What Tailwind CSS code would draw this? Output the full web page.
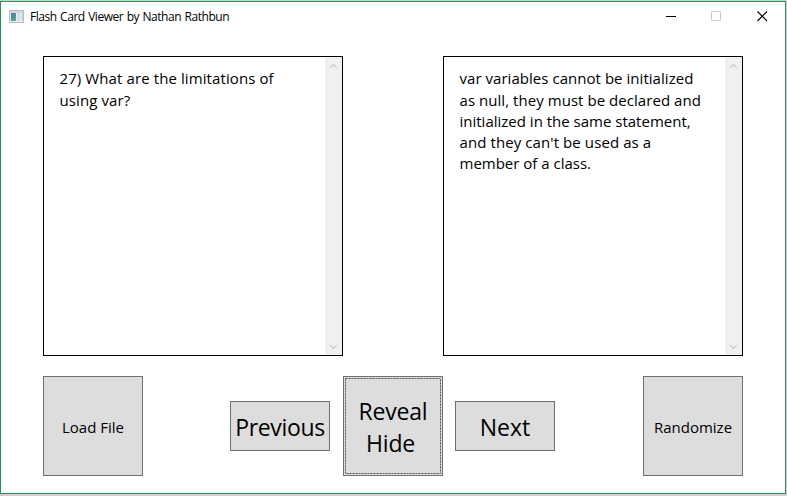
<!DOCTYPE html>
<html lang="en">
<head>
<meta charset="utf-8">
<title>Flash Card Viewer by Nathan Rathbun</title>
<script src="https://cdn.jsdelivr.net/npm/@tailwindcss/browser@4"></script>
</head>
<body class="w-[787px] h-[496px] overflow-hidden bg-[#d0d0d0] pt-px font-['Open_Sans','Noto_Sans',sans-serif] text-black">
<div class="w-[786px] h-[493px] border border-[#2a9058] bg-white flex flex-col">
  <header class="h-[30px] flex items-center shrink-0">
    <svg class="ml-2 mb-px w-4 h-[14px] shrink-0" viewBox="0 0 16 14" shape-rendering="crispEdges">
      <defs><linearGradient id="g" x1="0" y1="0" x2="1" y2="1"><stop offset="0" stop-color="#4778a8"/><stop offset="1" stop-color="#55b483"/></linearGradient></defs>
      <rect x="0" y="0" width="15" height="13" fill="#b9b9c1"/>
      <rect x="1" y="1" width="13" height="2" fill="#d5d5da"/>
      <rect x="1" y="3" width="13" height="9" fill="#f1f1f4"/>
      <rect x="2" y="3" width="5" height="8" fill="url(#g)"/>
      <rect x="8" y="3" width="3" height="8" fill="#dcdce0"/>
      <rect x="12" y="3" width="2" height="8" fill="#cfe0dc"/>
    </svg>
    <h1 class="ml-[5px] text-[12px] leading-4 tracking-[-0.450px] [word-spacing:0.7px] whitespace-nowrap">Flash Card Viewer by Nathan Rathbun</h1>
    <div class="ml-auto flex h-[28px] self-start">
      <div class="w-[45px] flex items-center justify-center"><svg class="w-[11px] h-[11px]" viewBox="0 0 11 11"><path d="M0 5.5h10" stroke="#000" fill="none"/></svg></div>
      <div class="w-[45px] flex items-center justify-center"><svg class="w-[11px] h-[11px]" viewBox="0 0 11 11"><path d="M.5 .5h9v9h-9z" stroke="#ccc" fill="none"/></svg></div>
      <div class="w-[46px] flex items-center justify-center"><svg class="w-[11px] h-[11px]" viewBox="0 0 11 11"><path d="M.5 .5l9.500 9.500M10 .5L.5 10" stroke="#000" stroke-width="1.200" fill="none"/></svg></div>
    </div>
  </header>
  <main class="pt-6 px-[42px] flex flex-col gap-5">
    <div class="flex gap-[100px]">
      <section class="w-[300px] h-[300px] border border-black flex justify-between">
        <div class="pl-[15.500px] pt-[10px] text-[15px] leading-[22px] whitespace-nowrap">
          <p class="tracking-[0.100px]">27) What are the limitations of</p>
          <p class="tracking-[0.100px]">using var?</p>
        </div>
        <div class="w-[17px] bg-[#f0f0f0] flex flex-col justify-between items-center pt-[6px] pb-[5px]">
          <svg class="w-[9px] h-[6px]" viewBox="0 0 9 6"><path d="M1 5l3.500-3.500L8 5" stroke="#cdcdcd" stroke-width="1.400" fill="none"/></svg>
          <svg class="w-[9px] h-[6px]" viewBox="0 0 9 6"><path d="M1 1l3.500 3.500L8 1" stroke="#cdcdcd" stroke-width="1.400" fill="none"/></svg>
        </div>
      </section>
      <section class="w-[300px] h-[300px] border border-black flex justify-between">
        <div class="pl-[15.500px] pt-[11px] text-[15px] leading-[21.280px] whitespace-nowrap">
          <p class="tracking-[0.040px]">var variables cannot be initialized</p>
          <p class="tracking-[0.050px] relative top-px">as null, they must be declared and</p>
          <p>initialized in the same statement,</p>
          <p class="tracking-[0.090px]">and they can't be used as a</p>
          <p>member of a class.</p>
        </div>
        <div class="w-[17px] bg-[#f0f0f0] flex flex-col justify-between items-center pt-[6px] pb-[5px]">
          <svg class="w-[9px] h-[6px]" viewBox="0 0 9 6"><path d="M1 5l3.500-3.500L8 5" stroke="#cdcdcd" stroke-width="1.400" fill="none"/></svg>
          <svg class="w-[9px] h-[6px]" viewBox="0 0 9 6"><path d="M1 1l3.500 3.500L8 1" stroke="#cdcdcd" stroke-width="1.400" fill="none"/></svg>
        </div>
      </section>
    </div>
    <div class="w-[700px] flex items-center whitespace-nowrap">
      <button class="w-[100px] h-[100px] border border-[#707070] bg-[#ddd] text-[15px] pt-0.5">Load File</button>
      <button class="ml-[87px] w-[100px] h-[50px] border border-[#707070] bg-[#ddd] text-[23px] leading-8 tracking-[-0.350px] pt-0.5">Previous</button>
      <button class="ml-[13px] w-[100px] h-[100px] border border-[#707070] bg-[#ddd] grid">
        <svg class="col-start-1 row-start-1 w-[98px] h-[98px]" viewBox="0 0 98 98"><rect x="1.500" y="1.500" width="95" height="95" fill="none" stroke="#505050" stroke-dasharray="2 1"/></svg>
        <span class="col-start-1 row-start-1 flex flex-col items-center justify-center text-[23px] leading-8 pt-0.5"><span class="tracking-[-0.200px]">Reveal</span><span class="mr-[5px] tracking-[-0.200px]">Hide</span></span>
      </button>
      <button class="ml-3 w-[100px] h-[50px] border border-[#707070] bg-[#ddd] text-[23px] leading-8 pt-0.5">Next</button>
      <button class="ml-auto w-[100px] h-[100px] border border-[#707070] bg-[#ddd] text-[15px] pt-0.5">Randomize</button>
    </div>
  </main>
</div>
</body>
</html>
